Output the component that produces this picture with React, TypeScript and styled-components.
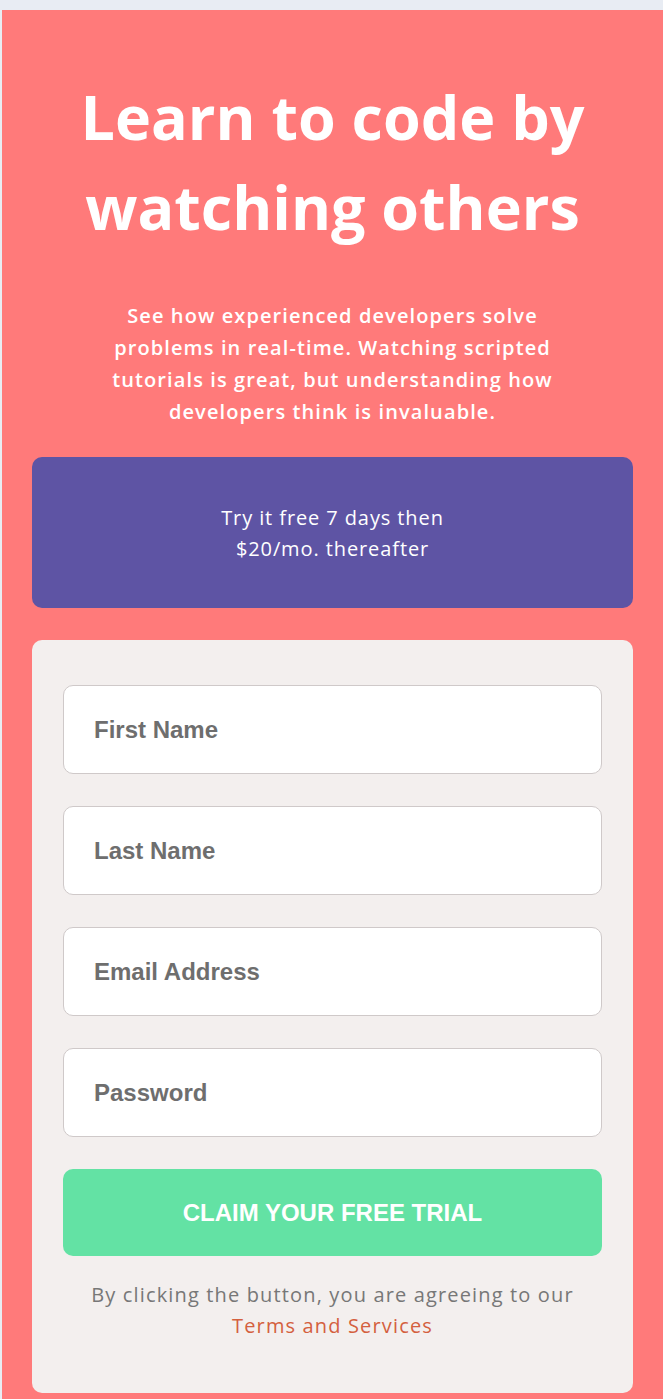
import styled, { createGlobalStyle } from "styled-components";

const GlobalStyle = createGlobalStyle`
  html, body {
    margin: 0;
    padding: 0;
    background: #e8ecf3;
  }
  body {
    padding: 10px 0 0 2px;
    font-family: "Open Sans", "Liberation Sans", sans-serif;
  }
`;

export const Page = styled.main`
  background: #ff7a7a;
  padding: 62px 30px 7px;
  display: flex;
  flex-direction: column;
  align-items: stretch;
`;

export const Intro = styled.section`
  display: flex;
  flex-direction: column;
  align-items: center;
  text-align: center;
  color: #fff;
`;

export const Title = styled.h1`
  margin: 0;
  font-size: 61px;
  line-height: 90px;
  font-weight: 700;
  letter-spacing: 0;
`;

export const Lead = styled.p`
  margin: 48px 0 0;
  max-width: 480px;
  font-size: 20px;
  line-height: 32px;
  font-weight: 600;
  letter-spacing: 1.1px;
`;

export const Offer = styled.div`
  margin-top: 29px;
  height: 151px;
  box-sizing: border-box;
  border-radius: 10px;
  background: #5e54a4;
  color: #fff;
  display: flex;
  align-items: center;
  justify-content: center;
  text-align: center;
  font-size: 20px;
  line-height: 31px;
  letter-spacing: 0.9px;
`;

export const FormCard = styled.form`
  margin-top: 32px;
  background: #f3efee;
  border-radius: 10px;
  padding: 45px 30px 52px;
  display: flex;
  flex-direction: column;
  gap: 32px;
`;

export const Field = styled.input`
  height: 89px;
  margin: 0 1px;
  box-sizing: border-box;
  border: 1px solid #cfc9c9;
  border-radius: 10px;
  background: #fff;
  padding: 0 30px;
  font-family: "Liberation Sans", Arial, sans-serif;
  font-size: 24px;
  font-weight: 700;
  color: #3d3b48;
  outline: none;

  &::placeholder {
    color: #6e6e6e;
    opacity: 1;
  }
`;

export const Submit = styled.button`
  height: 87px;
  margin: 0 1px;
  border: none;
  border-radius: 10px;
  background: #63e2a4;
  color: #fff;
  font-family: "Liberation Sans", Arial, sans-serif;
  font-size: 24px;
  font-weight: 700;
  text-transform: uppercase;
  cursor: pointer;
`;

export const Terms = styled.p`
  margin: -9px 0 0;
  text-align: center;
  font-size: 20px;
  line-height: 31px;
  letter-spacing: 1.15px;
  color: #777;

  a {
    color: #d4603e;
    text-decoration: none;
  }
`;

const fields = ["First Name", "Last Name", "Email Address", "Password"];

export default function App() {
  return (
    <>
      <GlobalStyle />
      <Page>
        <Intro>
          <Title>
            Learn to code by
            <br />
            watching others
          </Title>
          <Lead>
            See how experienced developers solve problems in real-time.
            Watching scripted tutorials is great, but understanding how
            developers think is invaluable.
          </Lead>
        </Intro>
        <Offer>
          <span>
            Try it free 7 days then
            <br />
            $20/mo. thereafter
          </span>
        </Offer>
        <FormCard onSubmit={(e) => e.preventDefault()}>
          {fields.map((f) => (
            <Field
              key={f}
              type={f === "Password" ? "password" : "text"}
              placeholder={f}
            />
          ))}
          <Submit type="submit">Claim your free trial</Submit>
          <Terms>
            By clicking the button, you are agreeing to our
            <br />
            <a href="#">Terms and Services</a>
          </Terms>
        </FormCard>
      </Page>
    </>
  );
}
